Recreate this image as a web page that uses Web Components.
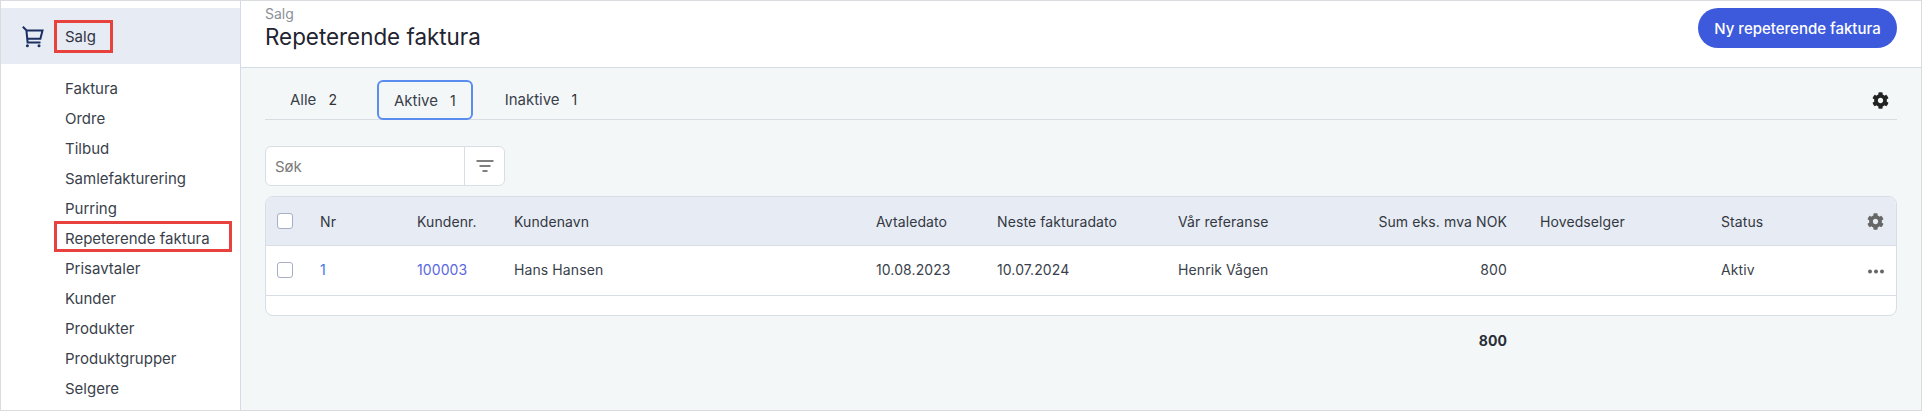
<!DOCTYPE html>
<html lang="no">
<head>
<meta charset="utf-8">
<title>Repeterende faktura</title>
<style>
  html, body { margin: 0; height: 100%; }
  body { font-family: Inter, "Liberation Sans", sans-serif; font-size: 14px; color: #3a3f4b; overflow: hidden; }
</style>
</head>
<body>
<app-shell>
  <side-nav slot="nav" title-text="Salg">
    <nav-item>Faktura</nav-item>
    <nav-item>Ordre</nav-item>
    <nav-item>Tilbud</nav-item>
    <nav-item>Samlefakturering</nav-item>
    <nav-item>Purring</nav-item>
    <nav-item marked>Repeterende faktura</nav-item>
    <nav-item>Prisavtaler</nav-item>
    <nav-item>Kunder</nav-item>
    <nav-item>Produkter</nav-item>
    <nav-item>Produktgrupper</nav-item>
    <nav-item>Selgere</nav-item>
  </side-nav>

  <page-header slot="header" crumb="Salg" heading="Repeterende faktura">
    <pill-button>Ny repeterende faktura</pill-button>
  </page-header>

  <tab-bar>
    <tab-item count="2" style="margin:0 24px 0 9px">Alle</tab-item>
    <tab-item count="1" active style="margin-right:16px">Aktive</tab-item>
    <tab-item count="1">Inaktive</tab-item>
  </tab-bar>

  <search-box placeholder="Søk"></search-box>

  <data-table>
    <table-row head>
      <span><check-box></check-box></span>
      <span>Nr</span>
      <span>Kundenr.</span>
      <span>Kundenavn</span>
      <span>Avtaledato</span>
      <span>Neste fakturadato</span>
      <span>Vår referanse</span>
      <span class="num">Sum eks. mva NOK</span>
      <span class="after-num">Hovedselger</span>
      <span>Status</span>
      <span><gear-icon size="17" color="#666" style="margin-left:7px"></gear-icon></span>
    </table-row>
    <table-row>
      <span><check-box></check-box></span>
      <span><a style="color:#3d7be6">1</a></span>
      <span><a style="color:#5a67e2">100003</a></span>
      <span>Hans Hansen</span>
      <span>10.08.2023</span>
      <span>10.07.2024</span>
      <span>Henrik Vågen</span>
      <span class="num">800</span>
      <span class="after-num"></span>
      <span>Aktiv</span>
      <span><dots-icon></dots-icon></span>
    </table-row>
    <table-row slot="total" total>
      <span></span><span></span><span></span><span></span><span></span><span></span><span></span>
      <span class="num"><b>800</b></span>
    </table-row>
  </data-table>
</app-shell>

<script>
class AppShell extends HTMLElement {
  constructor() {
    super();
    this.attachShadow({ mode: 'open' });
    this.shadowRoot.innerHTML = `
      <style>
        :host { display: flex; box-sizing: border-box; width: 1922px; height: 411px; border: 1px solid #d9dbde; background: #f4f7f8; overflow: hidden; }
        .main { flex: 1; min-width: 0; display: flex; flex-direction: column; }
        .body { padding: 12px 24px 0; }
      </style>
      <slot name="nav"></slot>
      <div class="main">
        <slot name="header"></slot>
        <div class="body"><slot></slot></div>
      </div>
    `;
  }
}

class SideNav extends HTMLElement {
  constructor() {
    super();
    this.attachShadow({ mode: 'open' });
  }

  connectedCallback() {
    this.shadowRoot.innerHTML = `
      <style>
        :host { display: block; box-sizing: border-box; width: 240px; flex-shrink: 0; background: #fff; border-right: 1px solid #d5dbe6; padding-top: 7px; }
        .head { position: relative; display: flex; align-items: center; height: 56px; background: #e7ebf3; padding-left: 64px; color: #2f3443; font-size: 15px; }
        svg { position: absolute; left: 21px; top: 18px; }
        .mark { position: absolute; left: 53px; top: 12px; width: 59px; height: 33px; box-sizing: border-box; border: 3px solid #e8423f; }
        .list { margin-top: 10px; }
      </style>
      <div class="head">
        <svg width="22" height="22" viewBox="0 0 22 22" fill="none" stroke="#1b2f63" stroke-width="2">
          <path d="M0.8 0.8 L4.4 4.2 L5.6 16.4 H18.5 M4.6 4.4 H20.5 L18.4 12.8 H5.4"/>
          <circle cx="5.4" cy="19.8" r="1.5" fill="#1b2f63" stroke="none"/>
          <circle cx="17" cy="19.8" r="1.5" fill="#1b2f63" stroke="none"/>
        </svg>
        ${this.getAttribute('title-text')}
        <div class="mark"></div>
      </div>
      <div class="list"><slot></slot></div>
    `;
  }
}

class NavItem extends HTMLElement {
  constructor() {
    super();
    this.attachShadow({ mode: 'open' });
    this.shadowRoot.innerHTML = `
      <style>
        :host { display: block; position: relative; height: 30px; line-height: 30px; padding-left: 64px; font-size: 15px; color: #3a3f4b; white-space: nowrap; }
        :host([marked])::after { content: ""; position: absolute; left: 53px; top: -3px; width: 178px; height: 31px; box-sizing: border-box; border: 3px solid #e8423f; }
      </style>
      <slot></slot>
    `;
  }
}

class PageHeader extends HTMLElement {
  constructor() {
    super();
    this.attachShadow({ mode: 'open' });
  }

  connectedCallback() {
    this.shadowRoot.innerHTML = `
      <style>
        :host { display: flex; justify-content: space-between; box-sizing: border-box; height: 67px; background: #fff; border-bottom: 1px solid #d5dbe6; padding: 3px 24px 0; }
        .crumb { font-size: 14px; line-height: 19px; color: #8b9099; }
        h1 { margin: 0; font-size: 22.4px; line-height: 28px; font-weight: 400; color: #1f2430; }
        .action { padding-top: 4px; }
      </style>
      <div>
        <div class="crumb">${this.getAttribute('crumb')}</div>
        <h1>${this.getAttribute('heading')}</h1>
      </div>
      <div class="action"><slot></slot></div>
    `;
  }
}

class PillButton extends HTMLElement {
  constructor() {
    super();
    this.attachShadow({ mode: 'open' });
    this.shadowRoot.innerHTML = `
      <style>
        :host { display: block; }
        button { display: block; width: 199px; height: 40px; border: none; border-radius: 20px; background: #3c5adb; color: #fff; font: 500 15px Inter, sans-serif; cursor: pointer; padding: 0; }
      </style>
      <button><slot></slot></button>
    `;
  }
}

class TabBar extends HTMLElement {
  constructor() {
    super();
    this.attachShadow({ mode: 'open' });
    this.shadowRoot.innerHTML = `
      <style>
        :host { display: flex; position: relative; height: 40px; box-sizing: border-box; border-bottom: 1px solid #d9dde2; }
        .gear { margin-left: auto; margin-right: 8px; padding-top: 12px; }
      </style>
      <slot></slot>
      <div class="gear"><gear-icon size="17" color="#222"></gear-icon></div>
    `;
  }
}

class TabItem extends HTMLElement {
  constructor() {
    super();
    this.attachShadow({ mode: 'open' });
  }

  connectedCallback() {
    this.shadowRoot.innerHTML = `
      <style>
        :host { display: flex; align-items: center; gap: 12px; box-sizing: border-box; height: 39px; padding: 0 16px; border-radius: 6px; font-size: 15px; color: #3a3f4b; white-space: nowrap; }
        :host([active]) { border: 2px solid #5b8def; padding: 0 15px; height: 40px; }
        .count { color: #333; font-size: 14px; }
      </style>
      <slot></slot><span class="count">${this.getAttribute('count')}</span>
    `;
  }
}

class SearchBox extends HTMLElement {
  constructor() {
    super();
    this.attachShadow({ mode: 'open' });
  }

  connectedCallback() {
    this.shadowRoot.innerHTML = `
      <style>
        :host { display: flex; box-sizing: border-box; width: 240px; height: 40px; margin-top: 26px; background: #fff; border: 1px solid #d9dee6; border-radius: 6px; }
        .field { flex: 1; display: flex; align-items: center; padding-left: 9px; font-size: 15px; color: #7a7a7a; }
        .filter { width: 39px; display: flex; align-items: center; justify-content: center; border-left: 1px solid #d9dee6; }
      </style>
      <div class="field">${this.getAttribute('placeholder')}</div>
      <div class="filter">
        <svg width="18" height="14" viewBox="0 0 18 14" fill="none" stroke="#555" stroke-width="1.6">
          <path d="M0.5 2 H17.5 M3.5 7 H14.5 M6.5 12 H11.5"/>
        </svg>
      </div>
    `;
  }
}

class DataTable extends HTMLElement {
  constructor() {
    super();
    this.attachShadow({ mode: 'open' });
    this.shadowRoot.innerHTML = `
      <style>
        :host { display: block; margin-top: 10px; }
        .box { box-sizing: border-box; border: 1px solid #d9dde6; border-radius: 8px; background: #fff; overflow: hidden; height: 120px; }
        .total { margin: 0 1px; }
      </style>
      <div class="box"><slot></slot></div>
      <div class="total"><slot name="total"></slot></div>
    `;
  }
}

class TableRow extends HTMLElement {
  constructor() {
    super();
    this.attachShadow({ mode: 'open' });
    this.shadowRoot.innerHTML = `
      <style>
        :host { display: grid; grid-template-columns: 54px 97px 97px 362px 121px 181px 140px 189px 214px 139px 1fr; align-items: center; box-sizing: border-box; height: 50px; padding-bottom: 2px; border-bottom: 1px solid #d9dde6; color: #3a3f4b; letter-spacing: .1px; white-space: nowrap; }
        :host([head]) { height: 49px; padding-bottom: 0; background: #e7ebf3; color: #333842; }
        :host([total]) { border: none; height: 48px; padding-bottom: 0; color: #2a2e38; }
        ::slotted(.num) { text-align: right; }
        ::slotted(.after-num) { padding-left: 33px; }
        ::slotted(:first-child) { padding-left: 11px; }
        :host(:not([head]):not([total])) ::slotted(:first-child) { padding-top: 1px; }
      </style>
      <slot></slot>
    `;
  }
}

class CheckBox extends HTMLElement {
  constructor() {
    super();
    this.attachShadow({ mode: 'open' });
    this.shadowRoot.innerHTML = `
      <style>
        :host { display: block; box-sizing: border-box; width: 16px; height: 16px; background: #fff; border: 1px solid #a6afc6; border-radius: 3px; }
      </style>
    `;
  }
}

class GearIcon extends HTMLElement {
  constructor() {
    super();
    this.attachShadow({ mode: 'open' });
  }

  connectedCallback() {
    const size = this.getAttribute('size');
    this.shadowRoot.innerHTML = `
      <style>
        :host { display: block; width: ${size}px; height: ${size}px; }
        svg { display: block; }
      </style>
      <svg width="${size}" height="${size}" viewBox="0 0 512 512" fill="${this.getAttribute('color')}">
        <path d="M487.4 315.7l-42.6-24.6c4.3-23.2 4.3-47 0-70.2l42.6-24.6c4.9-2.8 7.1-8.6 5.5-14-11.1-35.6-30-67.8-54.7-94.6-3.8-4.1-10-5.1-14.8-2.3L380.8 110c-17.9-15.4-38.5-27.3-60.8-35.1V25.8c0-5.6-3.9-10.5-9.4-11.7-36.7-8.2-74.3-7.8-109.2 0-5.5 1.2-9.4 6.1-9.4 11.7V75c-22.2 7.9-42.8 19.8-60.8 35.1L88.7 85.5c-4.9-2.8-11-1.9-14.8 2.3-24.7 26.7-43.6 58.9-54.7 94.6-1.7 5.4.6 11.2 5.5 14L67.3 221c-4.3 23.2-4.3 47 0 70.2l-42.6 24.6c-4.9 2.8-7.1 8.6-5.5 14 11.1 35.6 30 67.8 54.7 94.6 3.8 4.1 10 5.1 14.8 2.3l42.6-24.6c17.9 15.4 38.5 27.3 60.8 35.1v49.2c0 5.6 3.9 10.5 9.4 11.7 36.7 8.2 74.3 7.8 109.2 0 5.5-1.2 9.4-6.1 9.4-11.7v-49.2c22.2-7.9 42.8-19.8 60.8-35.1l42.6 24.6c4.9 2.8 11 1.9 14.8-2.3 24.7-26.7 43.6-58.9 54.7-94.6 1.5-5.5-.7-11.3-5.6-14.1zM256 336c-44.1 0-80-35.9-80-80s35.9-80 80-80 80 35.9 80 80-35.9 80-80 80z"/>
      </svg>
    `;
  }
}

class DotsIcon extends HTMLElement {
  constructor() {
    super();
    this.attachShadow({ mode: 'open' });
    this.shadowRoot.innerHTML = `
      <style>
        :host { display: block; margin: 3px 0 0 8px; }
        svg { display: block; }
      </style>
      <svg width="16" height="5" viewBox="0 0 16 5" fill="#666">
        <circle cx="2" cy="2.5" r="2"/><circle cx="8" cy="2.5" r="2"/><circle cx="14" cy="2.5" r="2"/>
      </svg>
    `;
  }
}

customElements.define('app-shell', AppShell);
customElements.define('side-nav', SideNav);
customElements.define('nav-item', NavItem);
customElements.define('page-header', PageHeader);
customElements.define('pill-button', PillButton);
customElements.define('tab-bar', TabBar);
customElements.define('tab-item', TabItem);
customElements.define('search-box', SearchBox);
customElements.define('data-table', DataTable);
customElements.define('table-row', TableRow);
customElements.define('check-box', CheckBox);
customElements.define('gear-icon', GearIcon);
customElements.define('dots-icon', DotsIcon);
</script>
</body>
</html>
